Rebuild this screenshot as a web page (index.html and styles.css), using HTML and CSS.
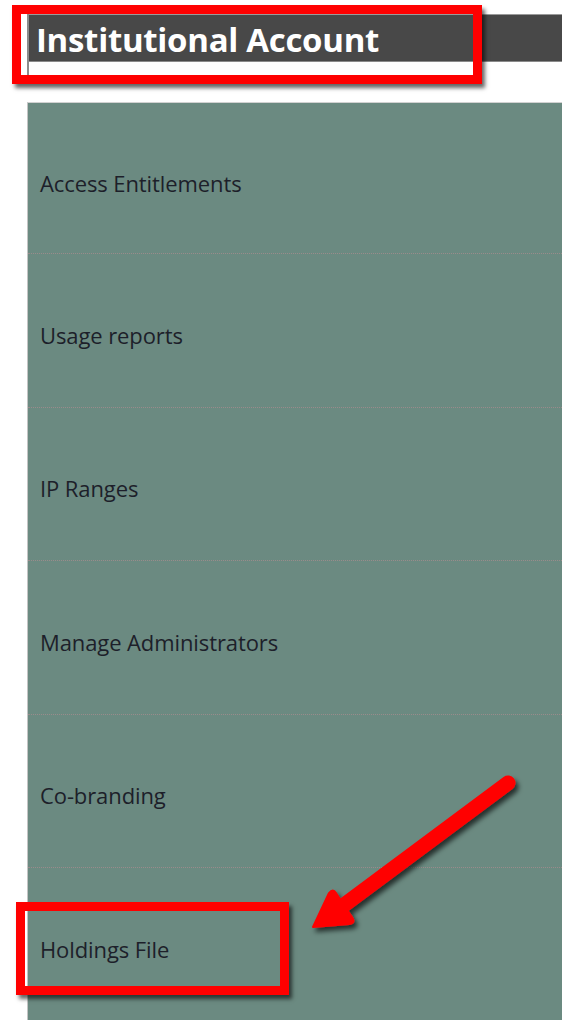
FILE: index.html
```html
<!DOCTYPE html>
<html lang="en">
<head>
<meta charset="utf-8">
<title>Institutional Account</title>
<link rel="stylesheet" href="styles.css">
</head>
<body>
<div class="page">
  <header class="title">
    <h1 class="title-bar">Institutional Account</h1>
    <div class="title-gap"></div>
  </header>

  <nav class="menu">
    <a class="menu-item first" href="#">Access Entitlements</a>
    <a class="menu-item" href="#">Usage reports</a>
    <a class="menu-item" href="#">IP Ranges</a>
    <a class="menu-item" href="#">Manage Administrators</a>
    <a class="menu-item" href="#">Co-branding</a>
    <a class="menu-item last" href="#">Holdings File</a>
  </nav>

  <!-- callout annotations drawn on top of the page -->
  <div class="callout callout-title"></div>
  <div class="callout callout-holdings"></div>
  <svg class="callout-arrow" width="562" height="1020" viewBox="0 0 562 1020" aria-hidden="true">
    <defs>
      <filter id="shade" x="-20%" y="-20%" width="140%" height="140%">
        <feDropShadow dx="3" dy="4" stdDeviation="2.5" flood-color="#000" flood-opacity="0.65"/>
      </filter>
    </defs>
    <g filter="url(#shade)" fill="#ff0000" stroke="#ff0000">
      <line x1="508" y1="783" x2="340" y2="908" stroke-width="15" stroke-linecap="round"/>
      <path d="M313 927 L329 893 Q333 888 336 893 Q343 905 352 917 Q356 923 349 924 Z" stroke-width="2" stroke-linejoin="round"/>
    </g>
  </svg>
</div>
</body>
</html>
```

FILE: styles.css
```css
html, body {
  margin: 0;
  padding: 0;
  background: #ffffff;
}

body {
  width: 562px;
  height: 1020px;
  overflow: hidden;
  font-family: "Open Sans", "Noto Sans", "DejaVu Sans", sans-serif;
}

.page {
  position: relative;
  height: 1020px;
  padding: 14px 0 0 27px;
  box-sizing: border-box;
}

/* page heading */
.title {
  border-left: 2px solid #8c8c8c;
}

.title-bar {
  margin: 0;
  height: 48px;
  box-sizing: border-box;
  padding: 2px 0 0 7px;
  display: flex;
  align-items: center;
  background: #484848;
  border-top: 1px solid #9a9a9a;
  border-bottom: 1px solid #8a8a8a;
  color: #ffffff;
  font-size: 33px;
  font-weight: 700;
  letter-spacing: -0.3px;
  white-space: nowrap;
}

.title-gap {
  height: 13px;
  background: #ffffff;
}

/* account menu */
.menu {
  margin-top: 27px;
  display: flex;
  flex-direction: column;
  background: #6b8a81;
  border-top: 1px solid #d2d2d2;
  border-left: 1px solid #c4c4c4;
}

.menu-item {
  height: 153.5px;
  box-sizing: border-box;
  display: flex;
  align-items: center;
  padding: 9px 0 0 12px;
  border-bottom: 1px dotted #9a8b8b;
  color: #1d1f2a;
  font-size: 22px;
  letter-spacing: -0.1px;
  text-decoration: none;
}

.menu-item.first {
  height: 151px;
}

.menu-item.last {
  border-bottom: none;
}

/* red callout frames */
.callout {
  position: absolute;
  box-sizing: border-box;
  border: 9px solid #ff0000;
  box-shadow: 3px 4px 4px rgba(0, 0, 0, 0.6);
}

.callout-title {
  left: 12px;
  top: 5px;
  width: 470px;
  height: 79px;
}

.callout-holdings {
  left: 16px;
  top: 902px;
  width: 273px;
  height: 93px;
}

.callout-arrow {
  position: absolute;
  left: 0;
  top: 0;
  pointer-events: none;
}
```
